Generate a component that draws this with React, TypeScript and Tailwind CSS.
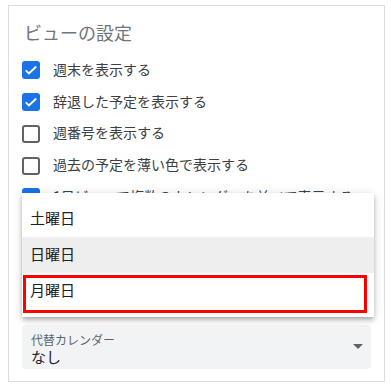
import React from 'react';

const font = { fontFamily: 'Roboto, "Noto Sans CJK JP", sans-serif' };

const rows = [
    {label: '週末を表示する', checked: true},
    {label: '辞退した予定を表示する', checked: true},
    {label: '週番号を表示する', checked: false},
    {label: '過去の予定を薄い色で表示する', checked: false},
    {label: '1日ビューで複数のカレンダーを並べて表示する', checked: true},
];

const CheckBox = ({checked}: {checked: boolean}) => (
    checked ? (
        <div className="w-[18px] h-[18px] rounded-[3px] bg-[#1a73e8] flex items-center justify-center flex-none">
            <svg width="14" height="14" viewBox="0 0 24 24" fill="none">
                <path d="M3 12.5l5.5 5.5L21 6" stroke="white" strokeWidth="3.2"/>
            </svg>
        </div>
    ) : (
        <div className="w-[18px] h-[18px] rounded-[3px] border-2 border-[#5f6368] flex-none"></div>
    )
);

const App = () => {
    return (
        <div className="w-[391px] h-[390px] bg-white pl-[8px] pt-[5px]" style={font}>
            <div className="relative w-[377px] h-[377px] border border-[#dadce0] overflow-hidden">
                <div className="pt-[16px] pl-[15px] text-[18px] leading-[24px] text-[#70757a]">ビューの設定</div>
                <div className="mt-[8.5px] pl-[13px]">
                    {rows.map((row, i) => (
                        <div key={i} className="h-[31.75px] flex items-center">
                            <CheckBox checked={row.checked}/>
                            <span className="ml-[13px] text-[14px] text-[#3c4043] whitespace-nowrap">{row.label}</span>
                        </div>
                    ))}
                </div>

                <div className="mt-[112px] mx-[13px] h-[44px] rounded-[4px] bg-[#f1f3f4] relative pl-[9px] pt-[9px]">
                    <div className="text-[12px] leading-[14px] text-[#5f6368]">代替カレンダー</div>
                    <div className="mt-[1px] text-[15px] leading-[18px] text-[#202124]">なし</div>
                    <svg className="absolute right-[8px] top-[19px]" width="10" height="5" viewBox="0 0 10 5">
                        <path d="M0 0h10L5 5z" fill="#5f6368"/>
                    </svg>
                </div>

                {/* dropdown menu */}
                <div className="absolute left-[13px] top-[187px] w-[352px] bg-white py-[8px] shadow-[0_2px_4px_-1px_rgba(0,0,0,0.2),0_4px_5px_0_rgba(0,0,0,0.14),0_1px_10px_0_rgba(0,0,0,0.12)]">
                    <div className="h-[36px] flex items-center pl-[8px] text-[15px] text-[#202124]">土曜日</div>
                    <div className="h-[36px] flex items-center pl-[8px] text-[15px] text-[#202124] bg-[#eeeeee]">日曜日</div>
                    <div className="h-[36px] flex items-center pl-[8px] text-[15px] text-[#202124]">月曜日</div>
                    <div className="absolute left-[1px] top-[82px] w-[344px] h-[38px] border-[3px] border-[#ff0000]"></div>
                </div>
            </div>
        </div>
    );
};

export default App;
